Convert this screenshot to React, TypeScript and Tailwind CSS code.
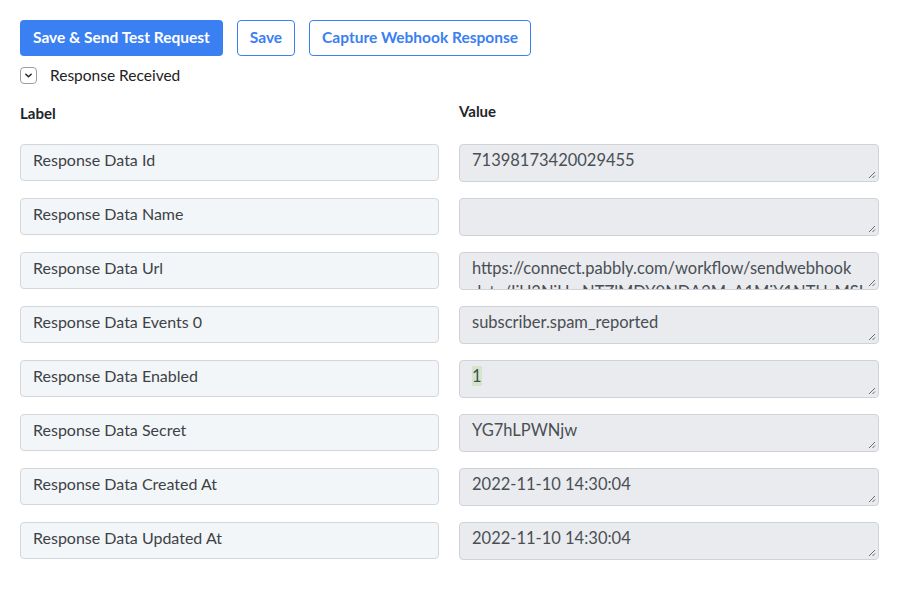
import React from "react";

type Row = { label: string; value: string; mark?: boolean };

const rows: Row[] = [
  { label: "Response Data Id", value: "71398173420029455" },
  { label: "Response Data Name", value: "" },
  {
    label: "Response Data Url",
    value:
      "https://connect.pabbly.com/workflow/sendwebhook\u200Bdata/IjU3NjUwNTZlMDY0NDA2MzA1MjY1NTUzMSI_3d_pc",
  },
  { label: "Response Data Events 0", value: "subscriber.spam_reported" },
  { label: "Response Data Enabled", value: "1", mark: true },
  { label: "Response Data Secret", value: "YG7hLPWNjw" },
  { label: "Response Data Created At", value: "2022-11-10 14:30:04" },
  { label: "Response Data Updated At", value: "2022-11-10 14:30:04" },
];

function Grip() {
  return (
    <svg
      className="absolute right-[2px] bottom-[2px]"
      width="8"
      height="8"
      viewBox="0 0 8 8"
      fill="none"
      stroke="#6b6b6b"
      strokeWidth="1"
    >
      <path d="M7 1 L1 7" />
      <path d="M7 4.5 L4.5 7" />
    </svg>
  );
}

export default function App() {
  return (
    <div
      className="min-h-[599px] bg-white px-5 pt-5 text-[#212529]"
      style={{ fontFamily: "Lato, 'Open Sans', sans-serif" }}
    >
      <div className="flex items-center gap-[14px]">
        <button className="h-9 rounded-[4px] bg-[#3a80f2] px-[13px] text-[15.5px] font-bold text-white">
          Save &amp; Send Test Request
        </button>
        <button className="h-9 rounded-[4px] border border-[#3a80f2] bg-white px-[12px] text-[15.5px] font-bold text-[#3a80f2]">
          Save
        </button>
        <button className="h-9 rounded-[4px] border border-[#3a80f2] bg-white px-[12px] text-[15.5px] font-bold text-[#3a80f2]">
          Capture Webhook Response
        </button>
      </div>

      <div className="mt-[10px] flex items-center gap-[13px]">
        <span className="flex h-[17px] w-[17px] items-center justify-center rounded-[4px] border border-[#9aa0a6] bg-white">
          <svg width="9" height="9" viewBox="0 0 10 10" fill="none" stroke="#222" strokeWidth="1.6" strokeLinecap="round" strokeLinejoin="round">
            <path d="M2 3.5 L5 6.5 L8 3.5" />
          </svg>
        </span>
        <span className="-mt-[1px] text-[15.5px] leading-5 text-[#222]">Response Received</span>
      </div>

      <div className="mt-[17px] grid grid-cols-[419px_420px] gap-x-5">
        <div className="text-[15px] font-bold text-[#212529]">Label</div>
        <div className="-mt-[2px] text-[15px] font-bold text-[#212529]">Value</div>
      </div>

      <div className="mt-[19px] grid grid-cols-[419px_420px] gap-x-5 gap-y-4">
        {rows.map((r) => (
          <React.Fragment key={r.label}>
            <div className="h-[37px] rounded-[4px] border border-[#d3d7dc] bg-[#f3f6f9] px-[12px] pt-[3px] text-[16px] text-[#3d4246]">
              {r.label}
            </div>
            <div className="relative h-[38px] overflow-hidden rounded-[4px] border border-[#cfd3d8] bg-[#e9ebef] px-[12px] pt-[3px] text-[16.5px] leading-[24px] break-words text-[#4a4f54]">
              {r.mark ? <span className="bg-[#d3e6c9]">{r.value}</span> : r.value}
              <Grip />
            </div>
          </React.Fragment>
        ))}
      </div>
    </div>
  );
}
